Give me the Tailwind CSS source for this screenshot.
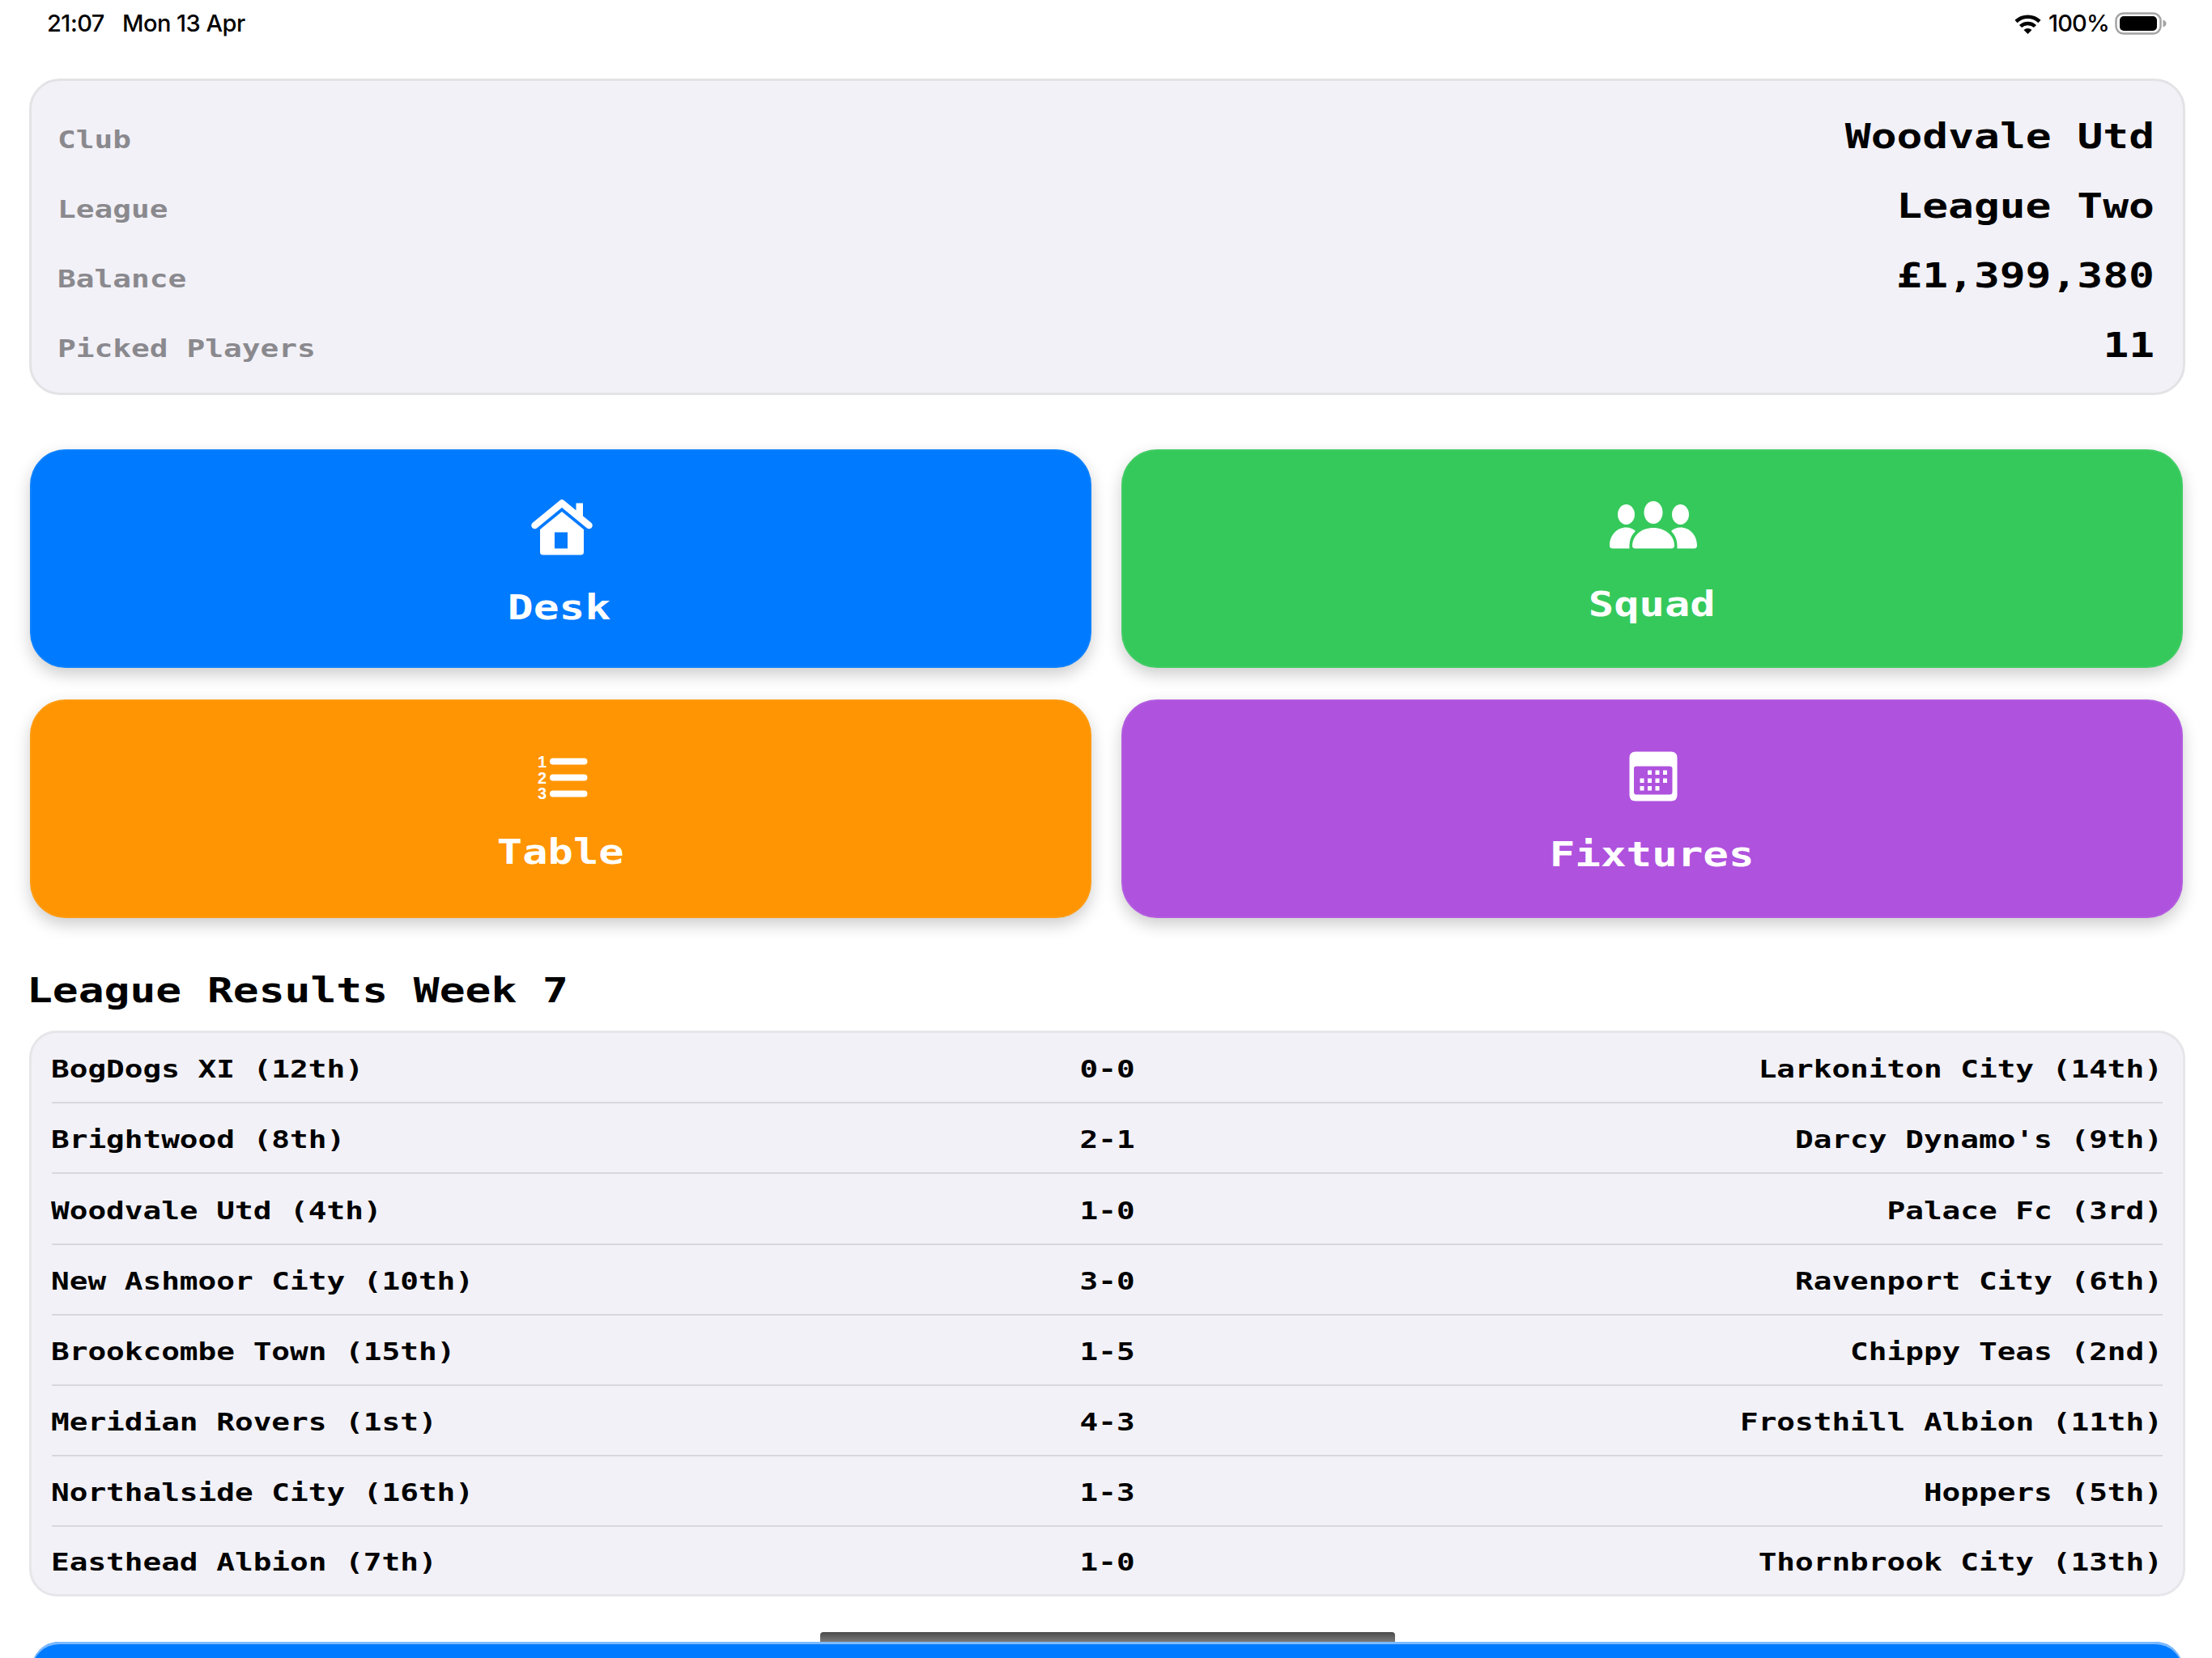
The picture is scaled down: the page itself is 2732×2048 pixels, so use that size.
<!DOCTYPE html>
<html lang="en">
<head>
    <meta charset="UTF-8">
    <meta name="viewport" content="width=device-width, initial-scale=1.0">
    <title>Woodvale Utd</title>
    <script src="https://cdn.jsdelivr.net/npm/@tailwindcss/browser@4"></script>
</head>
<body class="relative h-[2048px] w-[2732px] overflow-hidden bg-white font-['DejaVu_Sans_Mono',monospace] font-bold text-black">
    <!-- Status bar -->
    <header class="flex h-[97px] items-start justify-between pt-[11px] pl-[58px] pr-[56px] font-['Inter',sans-serif] text-[29px] leading-[36px] font-medium">
        <div class="flex gap-[22px]">
            <span id="clock" class="tracking-[-0.5px]">21:07</span>
            <span class="tracking-[-0.5px]">Mon 13 Apr</span>
        </div>
        <div class="flex items-center">
            <svg class="mr-[9px] h-[25px] w-[33px]" viewBox="0 0 33 25" fill="none" stroke="black" stroke-width="4.5">
                <path d="M2 9.5A21 21 0 0 1 31 9.5" />
                <path d="M7.5 15.5A13 13 0 0 1 25.5 15.5" />
                <path d="M16.5 25L11.5 20A7.500 7.500 0 0 1 21.500 20Z" fill="black" stroke="none" />
            </svg>
            <span class="tracking-[-0.8px]">100%</span>
            <svg class="ml-[7px] h-[28px] w-[64px]" viewBox="0 0 64 28">
                <rect x="1.500" y="1.500" width="55" height="25" rx="9" fill="none" stroke="#a3a3a3" stroke-width="2.500" />
                <rect x="6" y="5" width="46" height="18" rx="5" />
                <path d="M59.500 9.500Q63.500 11 63.500 14T59.500 18.500Z" fill="#a3a3a3" />
            </svg>
        </div>
    </header>

    <main class="pl-[36px] pr-[33px]">
        <!-- Club info -->
        <section class="h-[391px] rounded-[38px] border-[3px] border-[#e3e3e6] bg-[#f2f1f7] pt-[37px] pl-[32px] pr-[35px]">
            <div class="flex h-[86px] items-baseline justify-between">
                <span class="origin-left scale-x-[1.22] text-[31px] text-[#8a898e]">Club</span>
                <span class="origin-right scale-x-[1.245] text-[42.5px]">Woodvale Utd</span>
            </div>
            <div class="flex h-[86px] items-baseline justify-between">
                <span class="origin-left scale-x-[1.22] text-[31px] text-[#8a898e]">League</span>
                <span class="origin-right scale-x-[1.245] text-[42.5px]">League Two</span>
            </div>
            <div class="flex h-[86px] items-baseline justify-between">
                <span class="origin-left scale-x-[1.22] text-[31px] text-[#8a898e]">Balance</span>
                <span class="origin-right scale-x-[1.245] text-[42.5px]">£1,399,380</span>
            </div>
            <div class="flex h-[86px] items-baseline justify-between">
                <span class="origin-left scale-x-[1.22] text-[31px] text-[#8a898e]">Picked Players</span>
                <span class="origin-right scale-x-[1.245] text-[42.5px]">11</span>
            </div>
        </section>

        <!-- Menu -->
        <nav class="mt-[67px] mr-[3px] ml-[1px] grid grid-cols-2 gap-x-[37px] gap-y-[39px] text-[42px] leading-[40px] text-white">
            <a class="flex h-[270px] flex-col items-center rounded-[44px] bg-[#007aff] pt-[61px] shadow-[0_8px_20px_rgba(0,0,0,0.2)] inset-ring-2 inset-ring-white/5">
                <svg class="ml-[2px] h-[70px] w-[76px]" viewBox="0 0 76 70" fill="white">
                    <path d="M4.500 33L38 5.500L71.500 33" fill="none" stroke="white" stroke-width="8.500" stroke-linecap="round" stroke-linejoin="round" />
                    <path d="M55.500 5.500H64V28L55.500 20Z" />
                    <path fill-rule="evenodd" d="M38 16L65 38V66Q65 69.500 61 69.500H15Q11 69.500 11 66V38ZM29 41.500V61.500H45V41.500Z" />
                </svg>
                <span class="mt-[45px] mr-[3px] scale-x-[1.26]">Desk</span>
            </a>
            <a class="flex h-[270px] flex-col items-center rounded-[44px] bg-[#35c95b] pt-[64px] shadow-[0_8px_20px_rgba(0,0,0,0.2)] inset-ring-2 inset-ring-white/5">
                <svg class="ml-[2px] h-[59px] w-[108px]" viewBox="0 0 108 59" fill="white">
                    <ellipse cx="20.500" cy="16.500" rx="10.500" ry="12.500" />
                    <ellipse cx="54" cy="14" rx="11.500" ry="14" />
                    <ellipse cx="87.500" cy="16.500" rx="10.500" ry="12.500" />
                    <path d="M0 55C0 42 9 32.500 20.500 32.500C25 32.500 29 34 32 37C27 42 24 48 24.500 58.500H4Q0 58.500 0 55Z" />
                    <path d="M28 55C28 43 39 33 54 33S80 43 80 55Q80 58.500 76 58.500H32Q28 58.500 28 55Z" />
                    <path d="M108 55C108 42 99 32.500 87.500 32.500C83 32.500 79 34 76 37C81 42 84 48 83.500 58.500H104Q108 58.500 108 55Z" />
                </svg>
                <span class="mt-[49px] scale-x-[1.24]">Squad</span>
            </a>
            <a class="flex h-[270px] flex-col items-center rounded-[44px] bg-[#ff9502] pt-[68px] shadow-[0_8px_20px_rgba(0,0,0,0.2)] inset-ring-2 inset-ring-white/5">
                <svg class="ml-[3px] h-[56px] w-[63px] overflow-visible" viewBox="0 0 63 56" fill="white">
                    <g font-family="Liberation Sans" font-weight="bold" font-size="20">
                        <text x="1" y="16">1</text>
                        <text x="1" y="35.500">2</text>
                        <text x="1" y="55">3</text>
                    </g>
                    <path d="M20 8.500H58.500M20 28.500H58.500M20 48.500H58.500" stroke="white" stroke-width="8" stroke-linecap="round" />
                </svg>
                <span class="mt-[45px] scale-x-[1.24]">Table</span>
            </a>
            <a class="flex h-[270px] flex-col items-center rounded-[44px] bg-[#af52de] pt-[64px] shadow-[0_8px_20px_rgba(0,0,0,0.2)] inset-ring-2 inset-ring-white/5">
                <svg class="ml-[2px] h-[62px] w-[60px]" viewBox="0 0 60 62" fill="white">
                    <path fill-rule="evenodd" d="M8 0.500H52Q59.500 0.500 59.500 8V54Q59.500 61.500 52 61.500H8Q0.500 61.500 0.500 54V8Q0.500 0.500 8 0.500ZM9 18.500Q6 18.500 6 21V50Q6 53.500 9 53.500H50Q53.500 53.500 53.500 50V21Q53.500 18.500 50 18.500Z" />
                    <path d="M25.500 23.500V29M35 23.500V29M44.500 23.500V29M16 33.500V39M25.500 33.500V39M35 33.500V39M44.500 33.500V39M16 43V48.500M25.500 43V48.500M35 43V48.500" stroke="white" stroke-width="5" />
                </svg>
                <span class="mt-[46px] scale-x-[1.25]">Fixtures</span>
            </a>
        </nav>

        <!-- Results -->
        <h2 class="mt-[65px] -ml-[3px] flex text-[42.5px] leading-[50px]"><span class="origin-left scale-x-[1.245]">League Results Week 7</span></h2>
        <section id="results" class="mt-[24px] rounded-[34px] border-[3px] border-[#e6e6ea] bg-[#f2f1f7] px-[25px] text-[30.5px]"></section>

        <!-- Next button, cut off by the bottom of the screen -->
        <a class="mt-[56px] mr-[3px] ml-[3px] block h-[120px] rounded-[34px] bg-[#007aff] shadow-[inset_0_3px_0_#7dbaff]"></a>
    </main>

    <!-- Home indicator -->
    <div class="absolute top-[2016px] left-[1013px] h-[12px] w-[710px] rounded-t-[4px] bg-gradient-to-b from-[#4b4b4b] to-[#7a7a7a]"></div>

    <script>
        const results = [
            ["BogDogs XI (12th)", "0-0", "Larkoniton City (14th)"],
            ["Brightwood (8th)", "2-1", "Darcy Dynamo's (9th)"],
            ["Woodvale Utd (4th)", "1-0", "Palace Fc (3rd)"],
            ["New Ashmoor City (10th)", "3-0", "Ravenport City (6th)"],
            ["Brookcombe Town (15th)", "1-5", "Chippy Teas (2nd)"],
            ["Meridian Rovers (1st)", "4-3", "Frosthill Albion (11th)"],
            ["Northalside City (16th)", "1-3", "Hoppers (5th)"],
            ["Easthead Albion (7th)", "1-0", "Thornbrook City (13th)"]
        ];

        document.getElementById('results').innerHTML = results.map(([home, score, away]) => `
            <div class="grid h-[87.2px] grid-cols-[1fr_auto_1fr] items-center border-b-[2px] border-[#d8d7dd] pt-[5px] last:h-[83px] last:border-b-0">
                <span class="-ml-[1px] origin-left scale-x-[1.236]">${home}</span>
                <span class="scale-x-[1.236]">${score}</span>
                <span class="origin-right scale-x-[1.236] text-right">${away}</span>
            </div>
        `).join('');
    </script>
</body>
</html>
